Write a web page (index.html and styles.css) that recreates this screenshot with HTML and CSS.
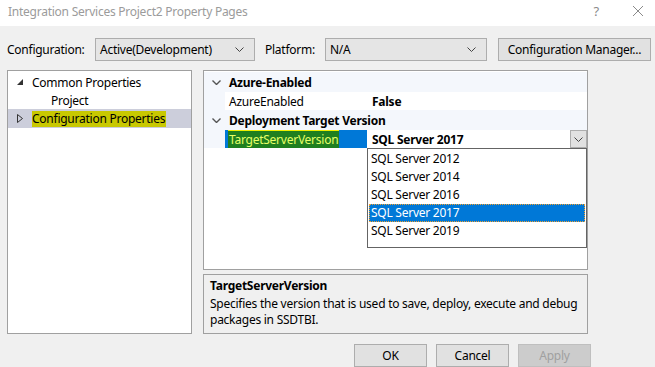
FILE: index.html
```html
<!DOCTYPE html>
<html>
<head>
<meta charset="utf-8">
<link rel="stylesheet" href="styles.css">
</head>
<body>
<div class="window">
  <div class="titlebar">
    <span class="title">Integration Services Project2 Property Pages</span>
    <span class="tb-help">?</span>
    <span class="tb-close"><svg width="12" height="12" viewBox="0 0 12 12"><path d="M1 1L11 11M11 1L1 11" stroke="#8a8a8a" stroke-width="1" fill="none"/></svg></span>
  </div>
  <div class="toolbar">
    <span class="lbl">Configuration:</span>
    <div class="combo combo-config"><span>Active(Development)</span><svg class="caret" width="9" height="5" viewBox="0 0 9 5"><path d="M0.5 0.5L4.5 4.5L8.5 0.5" stroke="#444" fill="none"/></svg></div>
    <span class="lbl lbl-platform">Platform:</span>
    <div class="combo combo-platform"><span>N/A</span><svg class="caret" width="9" height="5" viewBox="0 0 9 5"><path d="M0.5 0.5L4.5 4.5L8.5 0.5" stroke="#444" fill="none"/></svg></div>
    <div class="btn btn-cfgmgr">Configuration Manager...</div>
  </div>
  <div class="main">
    <div class="tree">
      <div class="tree-row">
        <svg class="tri" width="6" height="6" viewBox="0 0 6 6"><polygon points="6,0 6,6 0,6" fill="#333"/></svg>
        <span>Common Properties</span>
      </div>
      <div class="tree-row child"><span>Project</span></div>
      <div class="tree-row selected">
        <svg class="tri tri-open" width="6" height="9" viewBox="0 0 6 9"><polygon points="0.5,0.5 5.5,4.5 0.5,8.5" fill="none" stroke="#333"/></svg>
        <span class="hl-yellow">Configuration Properties</span>
      </div>
    </div>
    <div class="right">
      <div class="grid">
        <div class="row cat">
          <div class="gutter"><svg width="9" height="5" viewBox="0 0 9 5"><path d="M0.5 0.5L4.5 4.5L8.5 0.5" stroke="#555" stroke-width="1.4" fill="none"/></svg></div>
          <div class="cat-name">Azure-Enabled</div>
        </div>
        <div class="row prop">
          <div class="gutter"></div>
          <div class="pname">AzureEnabled</div>
          <div class="pval bold">False</div>
        </div>
        <div class="row cat">
          <div class="gutter"><svg width="9" height="5" viewBox="0 0 9 5"><path d="M0.5 0.5L4.5 4.5L8.5 0.5" stroke="#555" stroke-width="1.4" fill="none"/></svg></div>
          <div class="cat-name">Deployment Target Version</div>
        </div>
        <div class="row prop">
          <div class="gutter"></div>
          <div class="pname sel"><span class="hl-green">TargetServerVersion</span></div>
          <div class="pval bold edit">
            <span>SQL Server 2017</span>
            <div class="dd-btn"><svg width="9" height="5" viewBox="0 0 9 5"><path d="M0.5 0.5L4.5 4.5L8.5 0.5" stroke="#444" fill="none"/></svg></div>
          </div>
        </div>
        <div class="dropdown">
          <div class="dd-item">SQL Server 2012</div>
          <div class="dd-item">SQL Server 2014</div>
          <div class="dd-item">SQL Server 2016</div>
          <div class="dd-item active">SQL Server 2017</div>
          <div class="dd-item">SQL Server 2019</div>
        </div>
      </div>
      <div class="desc">
        <div class="desc-title">TargetServerVersion</div>
        <div class="desc-text">Specifies the version that is used to save, deploy, execute and debug packages in SSDTBI.</div>
      </div>
    </div>
  </div>
  <div class="buttons">
    <div class="btn dlg">OK</div>
    <div class="btn dlg">Cancel</div>
    <div class="btn dlg disabled">Apply</div>
  </div>
</div>
</body>
</html>
```
FILE: styles.css
```css
html, body {
  margin: 0;
  padding: 0;
}
body {
  width: 655px;
  height: 367px;
  overflow: hidden;
  background: #f0f0f0;
  font-family: "Noto Sans", "DejaVu Sans", sans-serif;
  font-size: 12px;
  letter-spacing: -0.25px;
  color: #000;
}
.window {
  width: 655px;
  height: 367px;
  display: flex;
  flex-direction: column;
}
.titlebar {
  height: 26px;
  background: #fff;
  display: flex;
  align-items: center;
  padding-left: 8px;
  box-sizing: border-box;
  padding-bottom: 4px;
}
.title {
  color: #9b9b9b;
  flex: 1;
}
.tb-help {
  color: #8a8a8a;
  font-size: 13px;
  margin-right: 33px;
}
.tb-close {
  display: flex;
  margin-right: 11px;
}
.toolbar {
  display: flex;
  align-items: center;
  padding-top: 12px;
  padding-left: 7px;
  height: 23px;
}
.lbl {
  width: 88px;
}
.lbl.lbl-platform {
  width: 60px;
  margin-left: 10px;
}
.combo {
  height: 23px;
  box-sizing: border-box;
  border: 1px solid #adadad;
  background: #e5e5e5;
  display: flex;
  align-items: center;
  justify-content: space-between;
  padding: 0 10px 0 4px;
}
.combo-config {
  width: 160px;
}
.combo-platform {
  width: 162px;
}
.btn {
  height: 23px;
  box-sizing: border-box;
  border: 1px solid #adadad;
  background: #e1e1e1;
  display: flex;
  align-items: center;
  justify-content: center;
}
.btn-cfgmgr {
  width: 153px;
  margin-left: 11px;
}
.main {
  display: flex;
  margin-top: 9px;
  padding-left: 7px;
  gap: 11px;
}
.tree {
  width: 185px;
  height: 264px;
  box-sizing: border-box;
  border: 1px solid #a0a0a0;
  background: #fff;
  padding-top: 2px;
}
.tree-row {
  height: 18px;
  display: flex;
  align-items: center;
  padding-left: 24px;
  position: relative;
}
.tree-row .tri {
  position: absolute;
  left: 9px;
  top: 6px;
}
.tree-row .tri-open {
  top: 5px;
}
.tree-row.child {
  padding-left: 43px;
}
.tree-row.selected {
  background: #cccedb;
  height: 19px;
}
.hl-yellow {
  background: #c8c800;
  padding-right: 1px;
  line-height: 16px;
}
.right {
  width: 385px;
  display: flex;
  flex-direction: column;
  gap: 4px;
}
.grid {
  height: 200px;
  box-sizing: border-box;
  border: 1px solid #a0a0a0;
  background: #fff;
  position: relative;
  padding-top: 1px;
}
.row {
  display: flex;
  height: 19px;
}
.row.cat {
  background: #f4f7fc;
  height: 20px;
}
.row.prop {
  height: 18px;
}
.gutter {
  width: 21px;
  background: #f4f7fc;
  display: flex;
  align-items: center;
  justify-content: center;
  padding-left: 3px;
  box-sizing: border-box;
  flex-shrink: 0;
}
.cat-name {
  font-weight: bold;
  display: flex;
  align-items: center;
  padding-left: 4px;
}
.pname {
  width: 142px;
  display: flex;
  align-items: center;
  padding-left: 4px;
  box-sizing: border-box;
  color: #000;
}
.pname.sel {
  background: #0078d7;
  padding-left: 3px;
}
.hl-green {
  background: #1f7f1f;
  color: #e6ff66;
  box-shadow: 0 -1px 0 #f0f000;
  padding: 0 1px;
  line-height: 17px;
}
.pval {
  flex: 1;
  display: flex;
  align-items: center;
  padding-left: 5px;
}
.bold {
  font-weight: bold;
}
.pval.edit {
  justify-content: space-between;
  padding-right: 0;
}
.dd-btn {
  width: 17px;
  height: 18px;
  box-sizing: border-box;
  border: 1px solid #adadad;
  background: #e1e1e1;
  display: flex;
  align-items: center;
  justify-content: center;
}
.dropdown {
  position: absolute;
  left: 163px;
  top: 77px;
  width: 220px;
  height: 100px;
  box-sizing: border-box;
  border: 1px solid #646464;
  background: #fff;
  padding: 1px 1px 0 1px;
}
.dd-item {
  height: 18px;
  line-height: 18px;
  padding-left: 2px;
}
.dd-item.active {
  background: #0078d7;
  color: #fff;
  outline: 1px dotted #f0a030;
  outline-offset: -1px;
}
.desc {
  height: 60px;
  box-sizing: border-box;
  border: 1px solid #a0a0a0;
  padding: 3px 6px 0 6px;
}
.desc-title {
  font-weight: bold;
  line-height: 16px;
}
.desc-text {
  line-height: 16px;
  margin-top: 2px;
}
.buttons {
  display: flex;
  justify-content: flex-end;
  gap: 9px;
  padding-right: 64px;
  margin-top: 10px;
}
.btn.dlg {
  width: 73px;
  height: 23px;
}
.btn.disabled {
  background: #cccccc;
  border-color: #bfbfbf;
  color: #a0a0a0;
}
```
